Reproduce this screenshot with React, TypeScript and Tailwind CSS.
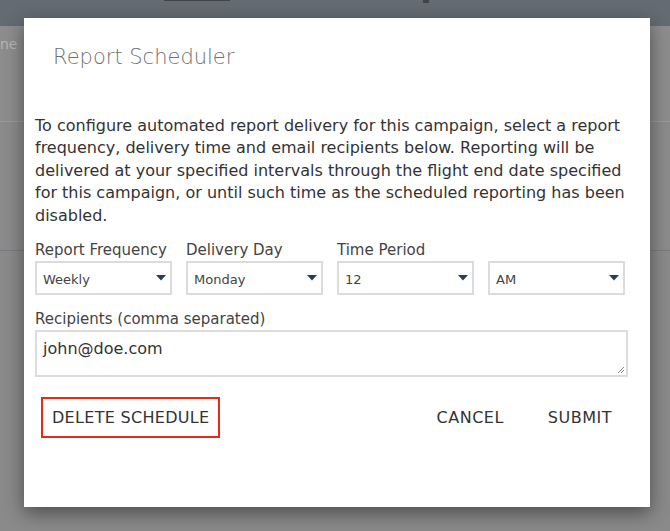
import React from "react"

const font = { fontFamily: '"DejaVu Sans", "Open Sans", sans-serif' }

function Caret() {
  return (
    <svg width="10" height="6" viewBox="0 0 10 6" className="shrink-0">
      <path d="M0 0 L10 0 L5 5.5 Z" fill="#2c3e50" />
    </svg>
  )
}

function SelectBox({ value }: { value: string }) {
  return (
    <div className="flex h-[34px] w-[137px] items-center justify-between border-2 border-[#dcdcdc] bg-white pl-[6px] pr-[4px] text-[13px] text-[#444]">
      <span className="pt-[3px]">{value}</span>
      <Caret />
    </div>
  )
}

function Field({ label, value }: { label: string; value: string }) {
  return (
    <div className="flex flex-col">
      <span className="text-[15px] leading-[22px] text-[#444]">{label}</span>
      <SelectBox value={value} />
    </div>
  )
}

export default function App() {
  return (
    <div className="relative h-[531px] w-[670px] overflow-hidden bg-[#8a8a8a]" style={font}>
      {/* page behind the overlay */}
      <div className="relative h-[26px] bg-[#646b72]">
        <div className="absolute left-[164px] top-0 h-px w-[66px] bg-[#3f4448]" />
        <div className="absolute left-[423px] top-0 h-[3px] w-[6px] bg-[#3f4448]" />
      </div>
      <div className="h-[96px] border-b border-[#9a9a9a] bg-[#8d8d8d] pt-[8px] text-[14px] text-[#b5b5b5]">
        <span>ne</span>
      </div>
      <div className="h-[129px] border-b border-[#777d82] bg-[#8b8b8b]" />

      {/* modal */}
      <div className="absolute left-[24px] top-[18px] flex h-[489px] w-[626px] flex-col bg-white shadow-[0_6px_18px_rgba(0,0,0,0.45)]">
        <h2 className="pl-[29px] pt-[24px] text-[21px] font-light text-[#707070]">Report Scheduler</h2>
        <div className="flex flex-col px-[11px] pt-[41px]">
          <p className="text-[16px] leading-[22.5px] text-[#333]">
            To configure automated report delivery for this campaign, select a report frequency, delivery time and
            email recipients below. Reporting will be delivered at your specified intervals through the flight end
            date specified for this campaign, or until such time as the scheduled reporting has been disabled.
          </p>
          <div className="mt-[12px] flex items-end gap-[14px]">
            <Field label="Report Frequency" value="Weekly" />
            <Field label="Delivery Day" value="Monday" />
            <Field label="Time Period" value="12" />
            <SelectBox value="AM" />
          </div>
          <span className="mt-[13px] text-[15px] leading-[22px] text-[#444]">Recipients (comma separated)</span>
          <div className="relative h-[47px] w-[593px] border-2 border-[#dcdcdc] px-[6px] pt-[5px] text-[16px] text-[#333]">
            john@doe.com
            <svg width="8" height="8" viewBox="0 0 8 8" className="absolute bottom-[1px] right-[1px]">
              <path d="M1 7 L7 1 M4 7 L7 4" stroke="#888" strokeWidth="1" />
            </svg>
          </div>
          <div className="mt-[20px] flex items-center">
            <button className="ml-[6px] h-[41px] border-2 border-[#e52b17] px-[9px] text-[16px] tracking-[0.3px] text-[#333]">
              DELETE SCHEDULE
            </button>
            <div className="ml-auto flex gap-[44px] pr-[27px] text-[16px] tracking-[0.5px] text-[#333]">
              <button>CANCEL</button>
              <button>SUBMIT</button>
            </div>
          </div>
        </div>
      </div>
    </div>
  )
}
